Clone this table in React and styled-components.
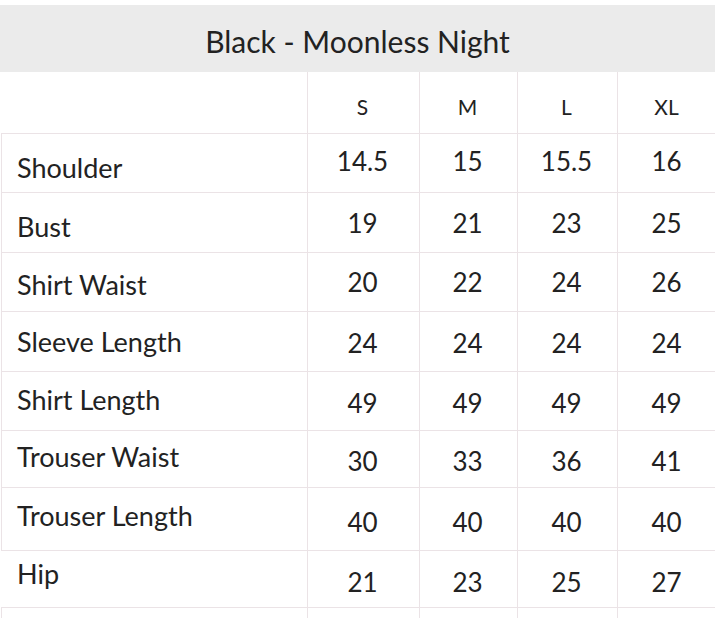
import React from "react";
import styled, { createGlobalStyle } from "styled-components";

const Global = createGlobalStyle`
  html, body { margin: 0; padding: 0; background: #ffffff; }
  body { font-family: Lato, "Open Sans", Arial, sans-serif; color: #222222; overflow: hidden; }
`;

const LINE = "#ebe3e6";

const Page = styled.div`
  width: 715px;
  height: 618px;
  overflow: hidden;
  padding-top: 5px;
  box-sizing: border-box;
`;

const TitleBand = styled.div`
  height: 67px;
  background: #ebebeb;
  display: flex;
  align-items: center;
  justify-content: center;
  font-size: 30px;
  font-weight: 400;
  color: #222222;
  padding-top: 4px;
  box-sizing: border-box;
`;

const Table = styled.div`
  padding-left: 1px;
  width: 717px;
`;

const Row = styled.div`
  display: grid;
  grid-template-columns: 307px 112px 98px 100px 100px;
  height: ${(p) => p.$h}px;
  box-sizing: border-box;
  border-bottom: 1px solid ${LINE};
`;

const Cell = styled.div`
  display: flex;
  align-items: center;
  box-sizing: border-box;
  border-right: 1px solid ${LINE};
  min-width: 0;
`;

const LabelCell = styled(Cell)`
  padding-left: 15px;
  border-left: 1px solid ${(p) => (p.$edge ? LINE : "transparent")};
  font-size: 27px;
  font-weight: 400;
  color: #222222;
`;

const LabelText = styled.span`
  transform: translateY(${(p) => p.$dy || 0}px);
`;

const ValueCell = styled(Cell)`
  justify-content: center;
  font-size: ${(p) => (p.$head ? 21 : 26)}px;
  font-weight: 400;
  color: #222222;
`;

const ValueText = styled.span`
  transform: translate(-1px, ${(p) => p.$dy || 0}px);
`;

const sizes = ["S", "M", "L", "XL"];

const rows = [
  { label: "Shoulder", values: ["14.5", "15", "15.5", "16"], h: 59, ldy: 4, vdy: -2 },
  { label: "Bust", values: ["19", "21", "23", "25"], h: 60, ldy: 3.5, vdy: -0.5 },
  { label: "Shirt Waist", values: ["20", "22", "24", "26"], h: 59, ldy: 2, vdy: -0.5 },
  { label: "Sleeve Length", values: ["24", "24", "24", "24"], h: 60, ldy: -0.5, vdy: 0.5 },
  { label: "Shirt Length", values: ["49", "49", "49", "49"], h: 59, ldy: -2, vdy: 1.5 },
  { label: "Trouser Waist", values: ["30", "33", "36", "41"], h: 57, ldy: -3, vdy: 2 },
  { label: "Trouser Length", values: ["40", "40", "40", "40"], h: 63, ldy: -4.5, vdy: 3 },
  { label: "Hip", values: ["21", "23", "25", "27"], h: 57, ldy: -6.5, vdy: 3, noEdge: true },
  { label: "", values: ["", "", "", ""], h: 60, ldy: 0, vdy: 0 },
];

export default function App() {
  return (
    <>
      <Global />
      <Page>
        <TitleBand>Black - Moonless Night</TitleBand>
        <Table>
          <Row $h={62}>
            <LabelCell />
            {sizes.map((s) => (
              <ValueCell key={s} $head>
                <ValueText $dy={4}>{s}</ValueText>
              </ValueCell>
            ))}
          </Row>
          {rows.map((r, i) => (
            <Row key={i} $h={r.h}>
              <LabelCell $edge={!r.noEdge}>
                <LabelText $dy={r.ldy}>{r.label}</LabelText>
              </LabelCell>
              {r.values.map((v, j) => (
                <ValueCell key={j}>
                  <ValueText $dy={r.vdy}>{v}</ValueText>
                </ValueCell>
              ))}
            </Row>
          ))}
        </Table>
      </Page>
    </>
  );
}
